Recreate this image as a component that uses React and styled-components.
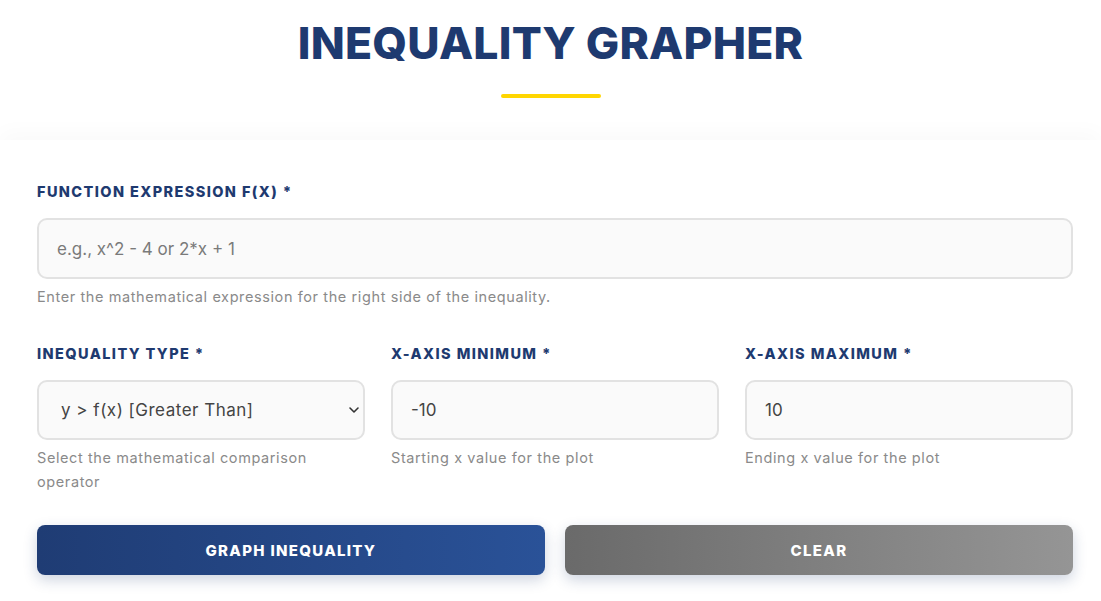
import React from "react";
import styled, { createGlobalStyle } from "styled-components";

const Global = createGlobalStyle`
  html, body { margin: 0; padding: 0; background: #ffffff; }
  body { font-family: "Inter", "Open Sans", sans-serif; overflow: hidden; }
  * { box-sizing: border-box; }
`;

const Page = styled.div`
  width: 1101px;
  height: 601px;
  overflow: hidden;
  display: flex;
  flex-direction: column;
`;

const Header = styled.header`
  display: flex;
  flex-direction: column;
  align-items: center;
  padding-top: 14px;
  height: 140px;
`;

const Title = styled.h1`
  margin: 0;
  font-family: "Inter", sans-serif;
  font-weight: 800;
  font-size: 44.5px;
  line-height: 58px;
  letter-spacing: 0.2px;
  color: #1e3a70;
`;

const Underline = styled.div`
  width: 100px;
  height: 4px;
  border-radius: 2px;
  background: #ffd600;
  margin-top: 22px;
`;

const Card = styled.section`
  background: #ffffff;
  box-shadow: 0 -8px 20px rgba(0, 0, 0, 0.025);
  padding: 43px 28px 0 37px;
  display: flex;
  flex-direction: column;
  flex: 1;
`;

const Field = styled.div`
  display: flex;
  flex-direction: column;
  min-width: 0;
`;

const Label = styled.label`
  font-family: "Inter", sans-serif;
  font-weight: 800;
  font-size: 14.5px;
  line-height: 18px;
  letter-spacing: 1.4px;
  text-transform: uppercase;
  color: #1e3a70;
  margin-bottom: 17px;
`;

const Input = styled.input`
  height: ${(p) => p.$h || 61}px;
  width: 100%;
  border: 2px solid #e2e2e2;
  border-radius: 10px;
  background: #fafafa;
  padding: 0 18px;
  font-family: "Inter", sans-serif;
  font-size: 17px;
  color: #444;
  outline: none;
  &::placeholder { color: #7a7a7a; }
`;

const SelectWrap = styled.div`
  position: relative;
`;

const Select = styled.select`
  appearance: none;
  -webkit-appearance: none;
  height: 60px;
  width: 100%;
  border: 2px solid #e2e2e2;
  border-radius: 10px;
  background: #fafafa;
  padding: 0 40px 0 22px;
  font-family: "Inter", sans-serif;
  font-size: 17px;
  letter-spacing: 0.5px;
  color: #444;
  outline: none;
`;

const Chevron = styled.svg`
  position: absolute;
  right: 5px;
  top: 24px;
  width: 12px;
  height: 12px;
  pointer-events: none;
`;

const Hint = styled.div`
  margin-top: 6px;
  font-family: "Inter", sans-serif;
  font-size: 14.5px;
  line-height: 24px;
  letter-spacing: 0.6px;
  color: #8a8a8a;
`;

const Row = styled.div`
  display: grid;
  grid-template-columns: repeat(3, 1fr);
  column-gap: 26px;
  margin-top: 36px;
`;

const Buttons = styled.div`
  display: grid;
  grid-template-columns: 1fr 1fr;
  column-gap: 20px;
  margin-top: 31px;
`;

const Button = styled.button`
  height: 50px;
  border: none;
  border-radius: 8px;
  background: ${(p) =>
    p.$variant === "gray"
      ? "linear-gradient(90deg, #6a6a6a 0%, #959595 100%)"
      : "linear-gradient(90deg, #1f3c74 0%, #2a5298 100%)"};
  box-shadow: 0 5px 14px rgba(30, 58, 112, 0.22);
  color: #ffffff;
  font-family: "Inter", sans-serif;
  font-weight: 800;
  font-size: 15px;
  letter-spacing: 1.3px;
  text-transform: uppercase;
  cursor: pointer;
`;

export default function App() {
  return (
    <Page>
      <Global />
      <Header>
        <Title>INEQUALITY GRAPHER</Title>
        <Underline />
      </Header>
      <Card>
        <Field>
          <Label>Function Expression f(x) *</Label>
          <Input placeholder="e.g., x^2 - 4 or 2*x + 1" />
          <Hint>Enter the mathematical expression for the right side of the inequality.</Hint>
        </Field>
        <Row>
          <Field>
            <Label>Inequality Type *</Label>
            <SelectWrap>
              <Select defaultValue="gt">
                <option value="gt">y &gt; f(x) [Greater Than]</option>
                <option value="lt">y &lt; f(x) [Less Than]</option>
              </Select>
              <Chevron viewBox="0 0 12 12">
                <path d="M2 4 L6 8 L10 4" fill="none" stroke="#333" strokeWidth="1.6" strokeLinecap="round" strokeLinejoin="round" />
              </Chevron>
            </SelectWrap>
            <Hint>Select the mathematical comparison operator</Hint>
          </Field>
          <Field>
            <Label>X-Axis Minimum *</Label>
            <Input $h={60} defaultValue="-10" />
            <Hint>Starting x value for the plot</Hint>
          </Field>
          <Field>
            <Label>X-Axis Maximum *</Label>
            <Input $h={60} defaultValue="10" />
            <Hint>Ending x value for the plot</Hint>
          </Field>
        </Row>
        <Buttons>
          <Button>Graph Inequality</Button>
          <Button $variant="gray">Clear</Button>
        </Buttons>
      </Card>
    </Page>
  );
}
